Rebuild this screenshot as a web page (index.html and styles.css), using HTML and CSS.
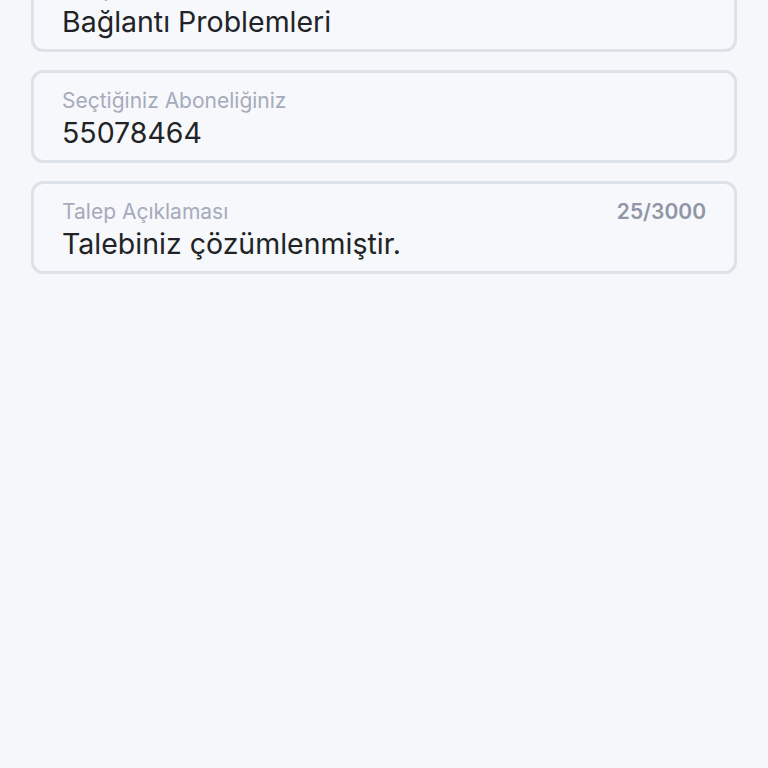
FILE: index.html
```html
<!DOCTYPE html>
<html lang="tr">
<head>
<meta charset="utf-8">
<link rel="stylesheet" href="styles.css">
</head>
<body>
<div class="list">
  <div class="field">
    <div class="label-row"><span class="label">Talep Konusu</span></div>
    <div class="value">Bağlantı Problemleri</div>
  </div>
  <div class="field">
    <div class="label-row"><span class="label">Seçtiğiniz Aboneliğiniz</span></div>
    <div class="value">55078464</div>
  </div>
  <div class="field">
    <div class="label-row"><span class="label">Talep Açıklaması</span><span class="count">25/3000</span></div>
    <div class="value">Talebiniz çözümlenmiştir.</div>
  </div>
</div>
</body>
</html>
```
FILE: styles.css
```css
html, body {
  margin: 0;
  padding: 0;
  background: #f5f7fa;
  height: 100%;
}
body {
  font-family: "Inter", "Noto Sans", sans-serif;
  overflow: hidden;
}
.list {
  display: flex;
  flex-direction: column;
  gap: 18px;
  padding: 0 31px;
  margin-top: -41px;
}
.field {
  height: 93px;
  box-sizing: border-box;
  border: 3px solid #dde1e8;
  border-radius: 12px;
  background: #f6f8fb;
  padding: 15px 28px 0 28px;
  display: flex;
  flex-direction: column;
}
.label-row {
  display: flex;
  justify-content: space-between;
  align-items: baseline;
  height: 28px;
}
.label {
  font-size: 21px;
  color: #a6abbb;
}
.count {
  font-size: 21px;
  font-weight: 600;
  color: #8f96a6;
}
.value {
  font-size: 28.5px;
  color: #222326;
  line-height: 34px;
}
```
